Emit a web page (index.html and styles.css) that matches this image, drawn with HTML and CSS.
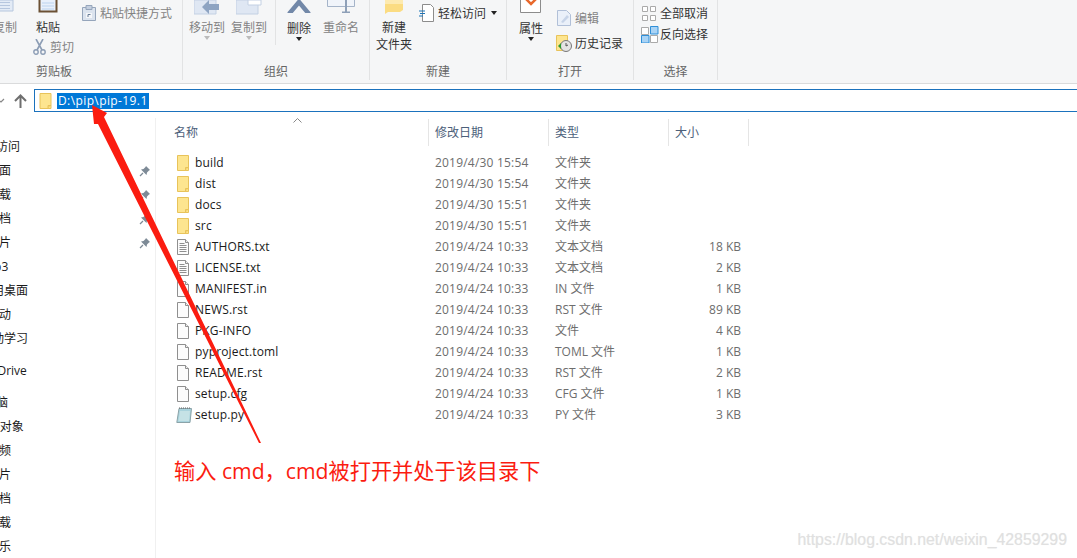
FILE: index.html
```html
<!DOCTYPE html>
<html>
<head>
    <title>pip-19.1</title>
    <link rel="stylesheet" href="styles.css">
</head>
<body>

<svg class="defs" width="0" height="0">
    <symbol id="i-folder" viewBox="0 0 12 16">
        <path d="M.5.5h11v15H.5z" fill="#fde58f" stroke="#e8c35a"/>
        <path d="M8.5 15.5v-3h3" fill="#f6d36f" stroke="#e8c35a"/>
    </symbol>
    <symbol id="i-doc" viewBox="0 0 12 16">
        <path d="M.5.5h8l3 3v12H.5z" fill="#fcfcfc" stroke="#8f8f8f"/>
        <path d="M8.5.5v3h3" fill="#eee" stroke="#8f8f8f"/>
    </symbol>
    <symbol id="i-text" viewBox="0 0 12 16">
        <use href="#i-doc"/>
        <path d="M2.500 4.500h5M2.500 6.500h7M2.500 8.500h7M2.500 10.500h7M2.500 12.500h7" stroke="#8f8f8f"/>
    </symbol>
    <symbol id="i-py" viewBox="0 0 16 16">
        <path d="M3 1.500h12.500l-1.500 14H.800z" fill="#a9d3dd" stroke="#8ba3a8"/>
        <path d="M4 4h10l-1 10H2.500z" fill="#c5e2e6"/>
        <path d="M3 1h12" stroke="#666" stroke-dasharray="1 1"/>
    </symbol>
    <symbol id="i-pin" viewBox="0 0 12 12">
        <path d="M7 1l4 4-1 .5-2 2-.5 2.500L2 4.500 4.500 4l2-2z" fill="#7d8a96"/>
        <path d="M4 8l-3 3" stroke="#7d8a96" stroke-width="1.300"/>
    </symbol>
</svg>

<div class="ribbon">
    <div class="group group-clip">
        <div class="group-body clip-grid">
            <div class="tool disabled">
                <div class="tool-icon"><svg width="18" height="12"><path d="M0 0h17v11H0z" fill="#e3ebf6" stroke="#b6c6de"/><path d="M3 2.500h11M3 5.500h11M3 8.500h11" stroke="#b6c6de"/></svg></div>
                <span class="tool-text">复制</span>
            </div>
            <div class="tool">
                <div class="tool-icon"><svg width="20" height="13"><path d="M1.500 0v11.500h17V0" fill="#e8f0fb" stroke="#6b5034" stroke-width="2"/><path d="M4 3h12M4 6h12M4 9h12" stroke="#bcd3ee"/></svg></div>
                <span class="tool-text">粘贴</span>
            </div>
            <div class="small-tool disabled shortcut">
                <svg width="14" height="16"><path d="M.5 2.500h13v13H.5z" fill="#dbe3ee" stroke="#95a5bb"/><path d="M4 .5h6v4H4z" fill="#c4cfdf" stroke="#95a5bb"/><path d="M4 8h6v5H4z" fill="#f4f6f9"/><path d="M6 12V9.500h2.500" stroke="#667a96" fill="none"/></svg>
                <span>粘贴快捷方式</span>
            </div>
            <div class="small-tool disabled cut">
                <svg width="13" height="16"><path d="M3 0l6 11M10 0L4 11" stroke="#8c9db5" stroke-width="1.600"/><circle cx="3" cy="13" r="2.200" fill="none" stroke="#8c9db5" stroke-width="1.400"/><circle cx="10" cy="13" r="2.200" fill="none" stroke="#8c9db5" stroke-width="1.400"/></svg>
                <span>剪切</span>
            </div>
        </div>
        <div class="group-label">剪贴板</div>
    </div>

    <div class="group group-org">
        <div class="group-body">
            <div class="tool disabled wide-icon">
                <div class="tool-icon"><svg width="26" height="15"><path d="M0 0h22v14H0z" fill="#dfe7f3" stroke="#c3d0e3"/><path d="M8 7l7-7v4h10v6H15v4z" fill="#8ea4c2"/></svg></div>
                <span class="tool-text">移动到</span>
                <i class="caret caret-grey"></i>
            </div>
            <div class="tool disabled wide-icon">
                <div class="tool-icon"><svg width="26" height="15"><path d="M0 0h22v14H0z" fill="#dfe7f3" stroke="#c3d0e3"/><path d="M12 0h13v5H12z" fill="#fff" stroke="#c3d0e3"/></svg></div>
                <span class="tool-text">复制到</span>
                <i class="caret caret-grey"></i>
            </div>
            <div class="inner-sep"></div>
            <div class="tool tool-low">
                <div class="tool-icon"><svg width="26" height="13"><path d="M3 14L13 2l10 12" fill="none" stroke="#7288a8" stroke-width="4.500"/></svg></div>
                <span class="tool-text">删除</span>
                <i class="caret"></i>
            </div>
            <div class="tool disabled">
                <div class="tool-icon"><svg width="28" height="13"><path d="M.5 0v6.500h27V0" fill="#f0f4fa" stroke="#a5b4c9"/><path d="M19 0v13M15 12.500h8" stroke="#8ea0b8" stroke-width="2"/></svg></div>
                <span class="tool-text">重命名</span>
            </div>
        </div>
        <div class="group-label">组织</div>
    </div>

    <div class="group group-new">
        <div class="group-body">
            <div class="tool tool-folder">
                <div class="tool-icon"><svg width="20" height="15"><path d="M1 0h18v10l-3 2H4l-3 2z" fill="#fbdc82"/><path d="M1 0h18v4H1z" fill="#fdeab0"/></svg></div>
                <span class="tool-text">新建<br>文件夹</span>
            </div>
            <div class="small-col">
                <div class="small-tool">
                    <svg width="15" height="18"><path d="M3.500.5h8l3 3v14h-11z" fill="#fff" stroke="#8c8c8c"/><path d="M0 7h6M1 9.500h5M0 12h4" stroke="#1c74b8" stroke-width="1.200"/></svg>
                    <span>轻松访问</span>
                    <i class="caret caret-side"></i>
                </div>
            </div>
        </div>
        <div class="group-label">新建</div>
    </div>

    <div class="group group-open">
        <div class="group-body">
            <div class="tool tool-props tool-low">
                <div class="tool-icon"><svg width="22" height="14"><path d="M.5 0v12.500h20V0" fill="#fff" stroke="#8c8c8c"/><path d="M6-1l5 5 5-5" fill="none" stroke="#e8692c" stroke-width="2.500"/></svg></div>
                <span class="tool-text">属性</span>
                <i class="caret"></i>
            </div>
            <div class="small-col open-col">
                <div class="small-tool disabled">
                    <svg width="16" height="16"><path d="M1.500.5h9l4 4v11h-13z" fill="#eaf0f9" stroke="#b1c0d8"/><path d="M5 12l6-7 2 2-6 6z" fill="#c7d4e8"/></svg>
                    <span>编辑</span>
                </div>
                <div class="small-tool">
                    <svg width="16" height="17"><path d="M.5.500h11v15H.5z" fill="#fde58f" stroke="#e8c35a"/><circle cx="10" cy="11" r="5.500" fill="#e4e4e4" stroke="#777"/><path d="M10 8v3l2-1" stroke="#555" fill="none"/><path d="M2 11l3-3v6z" fill="#2e9a2e"/></svg>
                    <span>历史记录</span>
                </div>
            </div>
        </div>
        <div class="group-label">打开</div>
    </div>

    <div class="group group-select">
        <div class="group-body">
            <div class="small-col select-col">
                <div class="small-tool">
                    <svg width="14" height="15"><path d="M.5.500h5v5h-5zM8.500.500h5v5h-5zM.5 9.500h5v5h-5zM8.500 9.500h5v5h-5z" fill="#fff" stroke="#aaa"/></svg>
                    <span>全部取消</span>
                </div>
                <div class="small-tool">
                    <svg width="18" height="17" class="invert-icon"><path d="M.5 1.500h7v7h-7zM9.500 9.500h7v7h-7z" fill="#fff" stroke="#aaa"/><path d="M9.500.5h7.500v7.500H9.500zM.5 9.500h7.500v7.500H.5z" fill="#a9d3f5" stroke="#2f8fd8"/></svg>
                    <span>反向选择</span>
                </div>
            </div>
        </div>
        <div class="group-label">选择</div>
    </div>
</div>

<div class="address-row">
    <svg class="nav-arrow" width="6" height="6"><path d="M-3 1l4 3 3-3" fill="none" stroke="#888" stroke-width="1.200"/></svg>
    <svg class="nav-up" width="13" height="14"><path d="M6.500 14V2M1 7l5.500-5.500L12 7" fill="none" stroke="#6f6f6f" stroke-width="2"/></svg>
    <div class="address-box">
        <svg class="address-icon" width="13" height="16"><use href="#i-folder"/></svg>
        <span class="address-text">D:\pip\pip-19.1</span>
    </div>
</div>

<div class="main">
    <div class="sidebar">
        <div class="nav-group">
            <div class="nav-row"><span class="cut-4">访问</span></div>
            <div class="nav-row"><span class="cut-13">桌面</span><svg class="pin" width="12" height="12"><use href="#i-pin"/></svg></div>
            <div class="nav-row"><span class="cut-13">下载</span><svg class="pin" width="12" height="12"><use href="#i-pin"/></svg></div>
            <div class="nav-row"><span class="cut-13">文档</span><svg class="pin" width="12" height="12"><use href="#i-pin"/></svg></div>
            <div class="nav-row"><span class="cut-13">图片</span><svg class="pin" width="12" height="12"><use href="#i-pin"/></svg></div>
            <div class="nav-row"><span class="cut-3">mp3</span></div>
            <div class="nav-row"><span class="cut-8">用桌面</span></div>
            <div class="nav-row"><span class="cut-13">活动</span></div>
            <div class="nav-row"><span class="cut-8">动学习</span></div>
        </div>
        <div class="nav-group"><div class="nav-row"><span class="cut-drive">OneDrive</span></div></div>
        <div class="nav-group">
            <div class="nav-row"><span class="cut-16">此电脑</span></div>
            <div class="nav-row"><span class="cut-obj">3D 对象</span></div>
            <div class="nav-row"><span class="cut-13">视频</span></div>
            <div class="nav-row"><span class="cut-13">图片</span></div>
            <div class="nav-row"><span class="cut-13">文档</span></div>
            <div class="nav-row"><span class="cut-13">下载</span></div>
            <div class="nav-row"><span class="cut-13">音乐</span></div>
        </div>
    </div>

    <div class="files">
        <div class="file-head">
            <div class="head-cell head-name">名称<svg class="sort" width="9" height="5"><path d="M.5 4.500l4-4 4 4" fill="none" stroke="#888"/></svg></div>
            <div class="head-cell head-date">修改日期</div>
            <div class="head-cell head-type">类型</div>
            <div class="head-cell head-size">大小</div>
        </div>
        <div class="file-list">
            <div class="file-row"><div class="file-name"><svg width="16" height="16"><use href="#i-folder" width="12" height="16" x="1"/></svg>build</div><div>2019/4/30 15:54</div><div>文件夹</div><div></div></div>
            <div class="file-row"><div class="file-name"><svg width="16" height="16"><use href="#i-folder" width="12" height="16" x="1"/></svg>dist</div><div>2019/4/30 15:54</div><div>文件夹</div><div></div></div>
            <div class="file-row"><div class="file-name"><svg width="16" height="16"><use href="#i-folder" width="12" height="16" x="1"/></svg>docs</div><div>2019/4/30 15:51</div><div>文件夹</div><div></div></div>
            <div class="file-row"><div class="file-name"><svg width="16" height="16"><use href="#i-folder" width="12" height="16" x="1"/></svg>src</div><div>2019/4/30 15:51</div><div>文件夹</div><div></div></div>
            <div class="file-row"><div class="file-name"><svg width="16" height="16"><use href="#i-text" width="12" height="16" x="1"/></svg>AUTHORS.txt</div><div>2019/4/24 10:33</div><div>文本文档</div><div>18 KB</div></div>
            <div class="file-row"><div class="file-name"><svg width="16" height="16"><use href="#i-text" width="12" height="16" x="1"/></svg>LICENSE.txt</div><div>2019/4/24 10:33</div><div>文本文档</div><div>2 KB</div></div>
            <div class="file-row"><div class="file-name"><svg width="16" height="16"><use href="#i-doc" width="12" height="16" x="1"/></svg>MANIFEST.in</div><div>2019/4/24 10:33</div><div>IN 文件</div><div>1 KB</div></div>
            <div class="file-row"><div class="file-name"><svg width="16" height="16"><use href="#i-doc" width="12" height="16" x="1"/></svg>NEWS.rst</div><div>2019/4/24 10:33</div><div>RST 文件</div><div>89 KB</div></div>
            <div class="file-row"><div class="file-name"><svg width="16" height="16"><use href="#i-doc" width="12" height="16" x="1"/></svg>PKG-INFO</div><div>2019/4/24 10:33</div><div>文件</div><div>4 KB</div></div>
            <div class="file-row"><div class="file-name"><svg width="16" height="16"><use href="#i-doc" width="12" height="16" x="1"/></svg>pyproject.toml</div><div>2019/4/24 10:33</div><div>TOML 文件</div><div>1 KB</div></div>
            <div class="file-row"><div class="file-name"><svg width="16" height="16"><use href="#i-doc" width="12" height="16" x="1"/></svg>README.rst</div><div>2019/4/24 10:33</div><div>RST 文件</div><div>2 KB</div></div>
            <div class="file-row"><div class="file-name"><svg width="16" height="16"><use href="#i-doc" width="12" height="16" x="1"/></svg>setup.cfg</div><div>2019/4/24 10:33</div><div>CFG 文件</div><div>1 KB</div></div>
            <div class="file-row"><div class="file-name"><svg width="16" height="16"><use href="#i-py"/></svg>setup.py</div><div>2019/4/24 10:33</div><div>PY 文件</div><div>3 KB</div></div>
        </div>
    </div>
</div>

<!-- red annotation drawn on top of the screenshot -->
<svg class="arrow" width="1077" height="558">
    <path d="M92 105L107 113L104 117L261 443L259 443L98 124L94 124Z" fill="#fb1c10"/>
</svg>
<div class="note">输入 cmd，cmd被打开并处于该目录下</div>
<div class="watermark">https://blog.csdn.net/weixin_42859299</div>

</body>
</html>
```

FILE: styles.css
```css
* { box-sizing: border-box; }
html, body {
    margin: 0;
    height: 558px;
    overflow: hidden;
}
body {
    position: relative;
    font-family: "Open Sans", "Noto Sans CJK SC", sans-serif;
    font-size: 12px;
    color: #1a1a1a;
    background: #fff;
}
.defs { position: absolute; }
svg { display: block; flex: none; }

/* ribbon */
.ribbon {
    display: flex;
    height: 84px;
    margin-left: -74px;
    background: #f5f6f7;
    border-bottom: 1px solid #dadbdc;
    color: #333;
}
.group {
    height: 80px;
    border-right: 1px solid #e2e3e4;
    display: flex;
    flex-direction: column;
}
.group-clip { width: 257px; }
.group-org { width: 187px; }
.group-new { width: 137px; }
.group-open { width: 127px; }
.group-select { width: 84px; }
.group-body {
    height: 63px;
    display: flex;
}
.group-label {
    height: 17px;
    line-height: 17px;
    text-align: center;
    color: #666;
}
.clip-grid {
    display: grid;
    grid-template-columns: 24px 24px auto;
    grid-template-rows: 37px 20px;
    column-gap: 19px;
    padding-left: 67px;
    justify-content: start;
}
.tool {
    display: flex;
    flex-direction: column;
    align-items: center;
    white-space: nowrap;
}
.tool-icon {
    height: 19px;
    display: flex;
    align-items: flex-start;
}
.tool-low .tool-text { margin-top: 1px; }
.tool-text {
    line-height: 17px;
    text-align: center;
}
.disabled { color: #838383; }
.caret {
    width: 0;
    height: 0;
    margin-top: 0;
    border: 3.5px solid transparent;
    border-bottom: 0;
    border-top: 4px solid #222;
}
.caret-grey { border-top-color: #bbb; }
.caret-side { margin: 0 0 0 1px; }
.group-org .group-body { padding-left: 6px; }
.wide-icon { width: 36px; }
.wide-icon + .wide-icon { margin-left: 6px; }
.inner-sep {
    width: 1px;
    height: 45px;
    margin: 0 11px 0 8px;
    background: #e2e3e4;
}
.inner-sep + .tool { width: 24px; margin-right: 12px; }
.small-tool {
    height: 20px;
    display: flex;
    align-items: center;
    gap: 6px;
    white-space: nowrap;
}
.small-col { display: flex; flex-direction: column; padding-top: 3px; }
.shortcut { grid-column: 3; grid-row: 1; margin: 3px 0 0 3px; gap: 4px; }
.cut { grid-column: 2 / 4; grid-row: 2; margin-left: -3px; gap: 4px; }
.group-new .group-body { padding-left: 6px; gap: 7px; }
.group-new .small-tool { gap: 4px; }
.tool-folder { width: 36px; }
.group-open .group-body { padding-left: 12px; gap: 13px; }
.tool-props { width: 24px; }
.open-col { padding-top: 8px; gap: 5px; }
.open-col .small-tool { gap: 3px; }
.select-col { padding-left: 8px; gap: 1px; }
.select-col .small-tool { gap: 4px; }
.invert-icon { margin-left: -1px; margin-right: -3px; }

/* address bar */
.address-row {
    height: 34px;
    display: flex;
    align-items: center;
    padding-bottom: 1px;
}
.nav-arrow { margin-right: 8px; }
.nav-up { margin-right: 7px; }
.address-box {
    flex: 1;
    height: 23px;
    display: flex;
    align-items: center;
    padding-left: 4px;
    gap: 5px;
    margin-right: -4px;
    border: 1px solid #1b72bd;
    background: #fff;
}
.address-text {
    height: 16px;
    line-height: 16px;
    padding: 0 1px;
    letter-spacing: .4px;
    color: #fff;
    background: #0078d7;
}

/* left tree, clipped by the left edge of the picture */
.main { display: flex; height: 440px; }
.sidebar {
    width: 156px;
    padding-top: 17px;
    border-right: 1px solid #f0f0f0;
    display: flex;
    flex-direction: column;
    gap: 8px;
}
.nav-row {
    height: 24px;
    line-height: 24px;
    display: flex;
    align-items: center;
    justify-content: space-between;
    padding-right: 4px;
    white-space: nowrap;
}
.cut-3 { margin-left: -17px; }
.cut-4 { margin-left: -4px; }
.cut-8 { margin-left: -8px; }
.cut-13 { margin-left: -13px; }
.cut-16 { margin-left: -28px; }
.cut-drive { margin-left: -26px; }
.cut-obj { margin-left: -19px; }

/* file list */
.files { flex: 1; padding-top: 1px; }
.file-head {
    display: grid;
    grid-template-columns: 273px 120px 120px 80px;
    height: 27px;
    margin-bottom: 6px;
}
.head-cell {
    line-height: 27px;
    padding-left: 6px;
    color: #4c607a;
    border-right: 1px solid #e5e5e5;
    position: relative;
}
.head-name { padding-left: 18px; }
.sort { position: absolute; left: 137px; top: -1px; }
.file-row {
    display: grid;
    grid-template-columns: 272px 120px 120px 73px;
    height: 21px;
    line-height: 21px;
    color: #6d6d6d;
}
.file-row > div:nth-child(2) { padding-left: 7px; letter-spacing: .2px; }
.file-row > div:nth-child(3) { padding-left: 7px; }
.file-row > div:nth-child(4) { text-align: right; }
.file-name {
    display: flex;
    align-items: center;
    gap: 3px;
    padding-left: 20px;
    letter-spacing: .15px;
    color: #1a1a1a;
}

/* annotation layer */
.arrow { position: absolute; left: 0; top: 0; }
.note {
    position: absolute;
    left: 174px;
    top: 456px;
    font-family: "Open Sans", "Noto Sans CJK SC", sans-serif;
    font-size: 21.2px;
    line-height: 30px;
    color: #fb1c10;
    white-space: nowrap;
}
.watermark {
    position: absolute;
    right: 10px;
    top: 530px;
    font-family: "Liberation Sans", sans-serif;
    font-size: 15.85px;
    line-height: 20px;
    color: #e0e0e0;
    text-shadow: 0 0 1px #eee;
    white-space: nowrap;
}
```
